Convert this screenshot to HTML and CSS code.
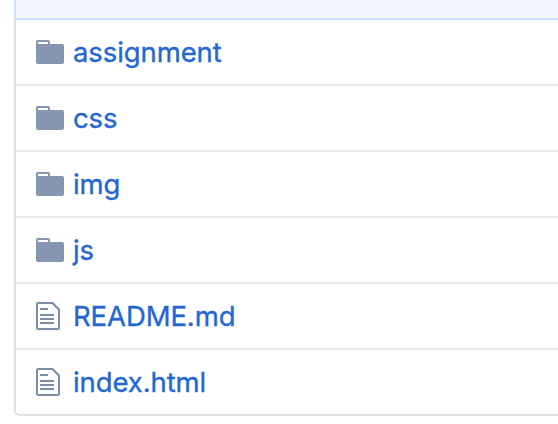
FILE: index.html
```html
<!DOCTYPE html>
<html lang="en">
<head>
<meta charset="utf-8">
<title>Files</title>
<link rel="stylesheet" href="styles.css">
</head>
<body>
<svg class="sprite" aria-hidden="true">
  <symbol id="folder" viewBox="0 0 14 16"><path fill-rule="evenodd" d="M13 4H7V3c0-.66-.31-1-1-1H1c-.55 0-1 .45-1 1v10c0 .55.45 1 1 1h12c.55 0 1-.45 1-1V5c0-.55-.45-1-1-1zM6 4H1V3h5v1z"/></symbol>
  <symbol id="file" viewBox="0 0 12 16"><path fill-rule="evenodd" d="M6 5H2V4h4v1zM2 8h7V7H2v1zm0 2h7V9H2v1zm0 2h7v-1H2v1zm10-7.500V14c0 .55-.45 1-1 1H1c-.55 0-1-.45-1-1V2c0-.55.45-1 1-1h7.500L12 4.500zM11 5L8 2H1v12h10V5z"/></symbol>
</svg>
<main class="files">
  <div class="commit"></div>
  <div class="row"><svg class="icon folder"><use href="#folder"/></svg><a>assignment</a></div>
  <div class="row"><svg class="icon folder"><use href="#folder"/></svg><a>css</a></div>
  <div class="row"><svg class="icon folder"><use href="#folder"/></svg><a>img</a></div>
  <div class="row"><svg class="icon folder"><use href="#folder"/></svg><a>js</a></div>
  <div class="row"><svg class="icon file"><use href="#file"/></svg><a>README.md</a></div>
  <div class="row"><svg class="icon file"><use href="#file"/></svg><a>index.html</a></div>
</main>
</body>
</html>
```
FILE: styles.css
```css
* { box-sizing: border-box; }
body { margin: 0; background: #fff; overflow: hidden; font-family: Inter, "Liberation Sans", sans-serif; }
.sprite { display: none; }
.files { margin-left: 14px; width: 560px; height: 416px; border: 2px solid #dfe2e5; border-top: 0; border-radius: 0 0 6px 6px; }
.commit { height: 20px; margin-left: -2px; background: #f3f7ff; border-left: 2px solid #cbe0fb; border-bottom: 2px solid #cbe0fb; }
.row { display: flex; align-items: center; height: 66px; padding-left: 20px; border-top: 2px solid #eaebef; }
.commit + .row { height: 64px; border-top: 0; }
.icon { flex: none; height: 32px; margin-right: 9px; }
.folder { width: 28px; fill: #8496b0; }
.file { width: 24px; margin-right: 13px; fill: #7a8da9; }
.row a { color: #2467d1; font-size: 27.5px; line-height: 40px; letter-spacing: -0.1px; -webkit-text-stroke: 0.35px #2467d1; }
```
